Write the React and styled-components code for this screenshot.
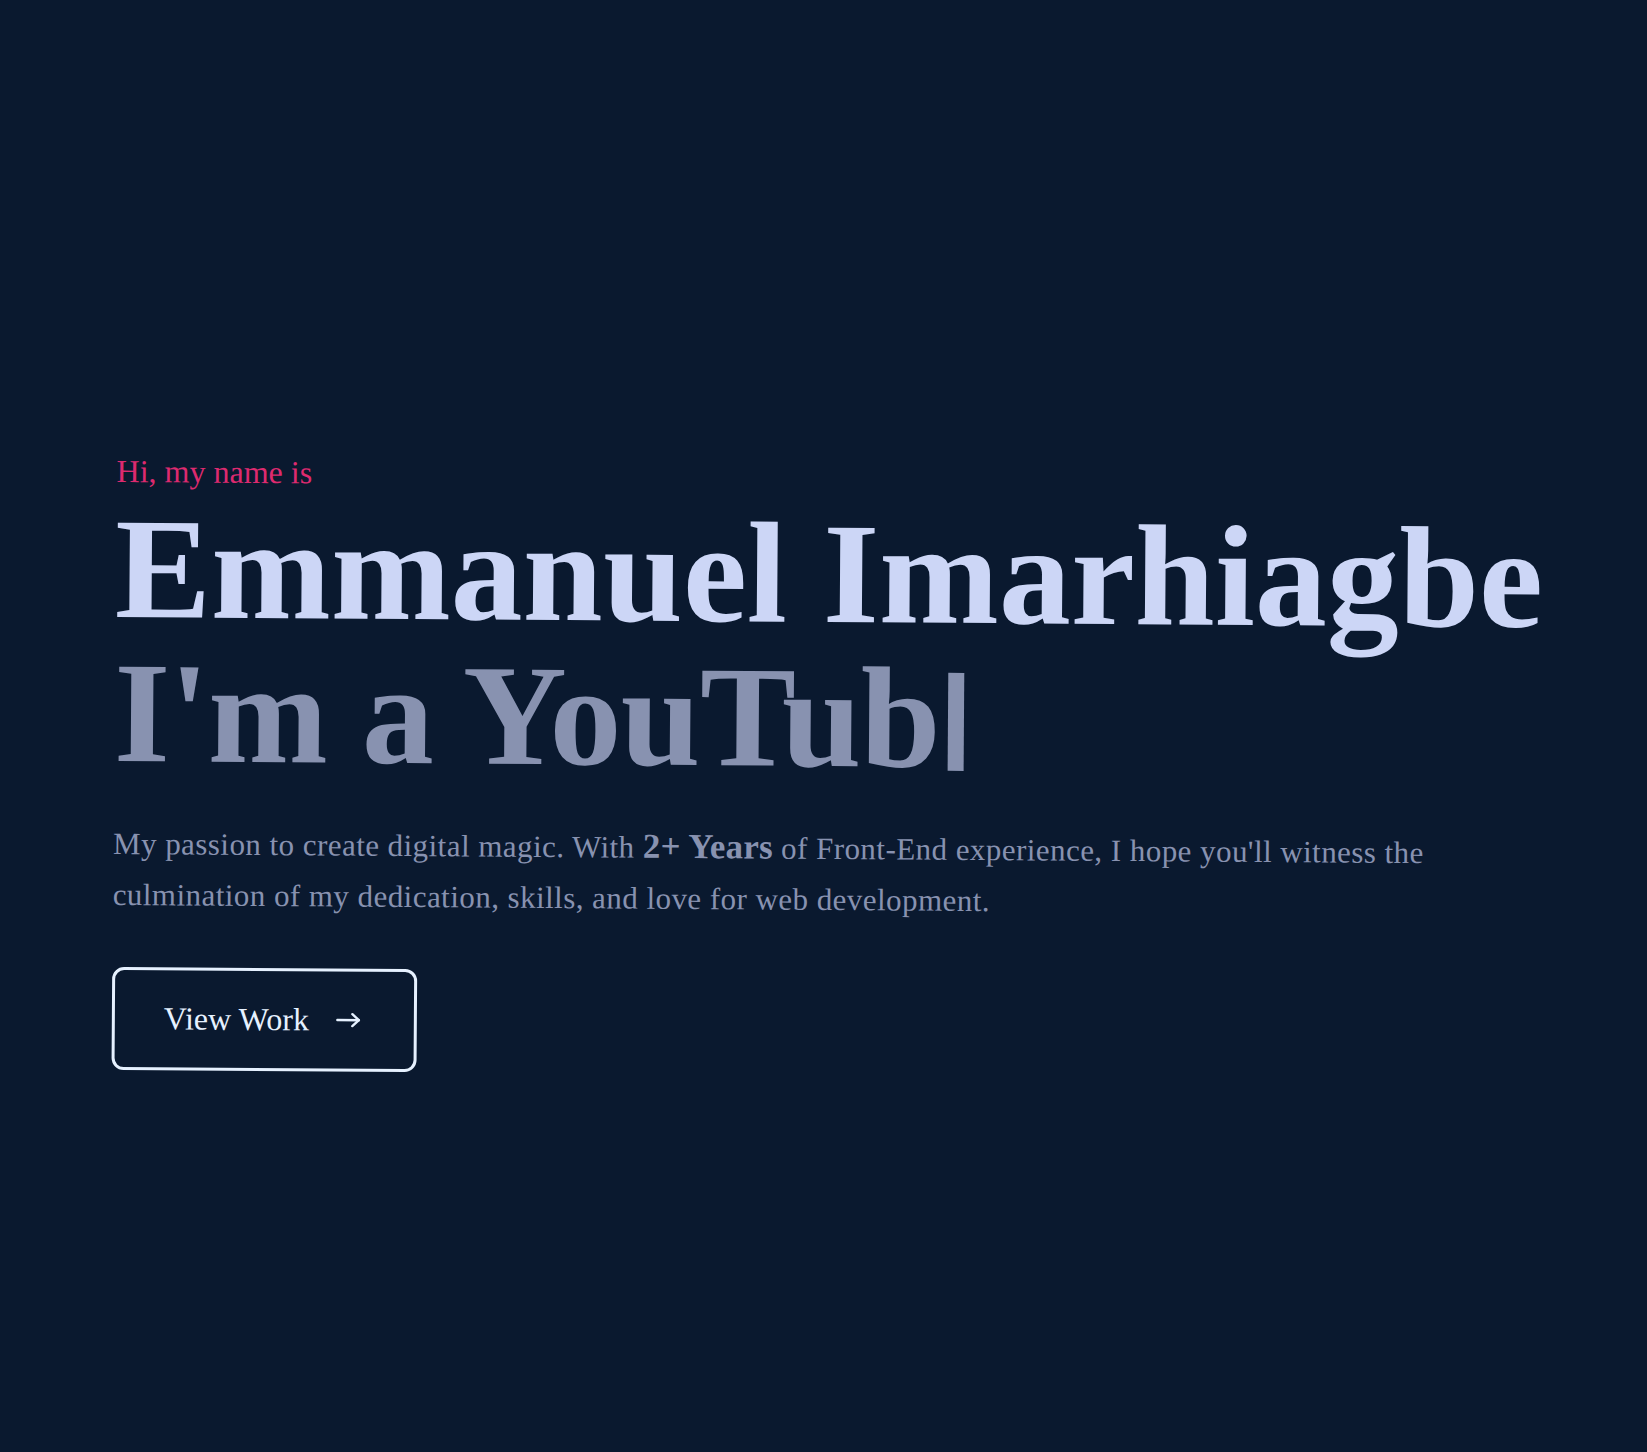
import React from "react";
import styled, { createGlobalStyle } from "styled-components";

const GlobalStyle = createGlobalStyle`
  * {
    box-sizing: border-box;
  }
  html, body {
    margin: 0;
    padding: 0;
    background: #0a192f;
  }
  body {
    font-family: "Liberation Serif", "Times New Roman", serif;
  }
`;

const HeroStyled = styled.section`
  min-height: 100vh;
  padding: 455px 20px 0 113px;
  background: #0a192f;
  overflow: hidden;

  .hero-content {
    transform: rotate(0.4deg);
    transform-origin: 0 400px;
  }
  .hero-intro {
    margin: 0 0 10px 1px;
    font-size: 32px;
    line-height: 1;
    font-weight: 400;
    color: #dd2a6f;
  }
  .hero-title {
    margin: 0;
    font-size: 144px;
    line-height: 1;
    font-weight: 700;
    color: #ccd6f6;
    white-space: nowrap;
  }
  .hero-typed {
    display: block;
    color: #8892b0;
    letter-spacing: -1px;
  }
  .hero-cursor {
    display: inline-block;
    width: 16px;
    height: 98px;
    margin-left: 8px;
    vertical-align: -4px;
    background: #8892b0;
  }
  .hero-text {
    max-width: 1400px;
    margin: 32px 0 47px;
    font-size: 31px;
    line-height: 51px;
    letter-spacing: 0.45px;
    color: #8892b0;
  }
  .hero-text strong {
    font-size: 35px;
    font-weight: 700;
    letter-spacing: 0.2px;
  }
`;

const OutlineButton = styled.a`
  display: inline-flex;
  align-items: center;
  gap: 27px;
  height: 103px;
  padding: 0 53px 0 49px;
  border: 3px solid #e6f1ff;
  border-radius: 12px;
  color: #e6f1ff;
  font-size: 32px;
  text-decoration: none;
  cursor: pointer;

  svg {
    width: 25px;
    height: 15px;
  }
`;

const ArrowIcon = () => (
  <svg viewBox="0 0 25 15" fill="none" stroke="currentColor" strokeWidth="2.4" strokeLinecap="round" strokeLinejoin="round">
    <path d="M1.5 7.5h21.5" />
    <path d="M16.5 1.5l6.5 6-6.5 6" />
  </svg>
);

const App = () => {
  return (
    <>
      <GlobalStyle />
      <HeroStyled>
        <div className="hero-content">
          <p className="hero-intro">Hi, my name is</p>
          <h1 className="hero-title">
            Emmanuel Imarhiagbe
            <span className="hero-typed">
              I'm a YouTub<span className="hero-cursor" />
            </span>
          </h1>
          <p className="hero-text">
            My passion to create digital magic. With <strong>2+ Years</strong> of
            Front-End experience, I hope you'll witness the culmination of my
            dedication, skills, and love for web development.
          </p>
          <OutlineButton href="#work">
            View Work
            <ArrowIcon />
          </OutlineButton>
        </div>
      </HeroStyled>
    </>
  );
};

export default App;
